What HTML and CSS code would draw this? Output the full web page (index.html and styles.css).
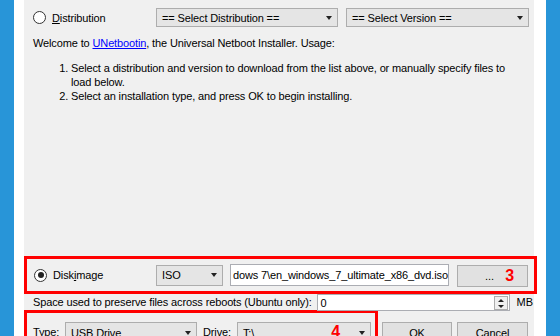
FILE: index.html
```html
<!DOCTYPE html>
<html>
<head>
<meta charset="utf-8">
<link rel="stylesheet" href="styles.css">
</head>
<body>
<div class="edge edge-left"></div>
<div class="gutter gutter-left"></div>
<main class="panel">
  <div class="row row-dist">
    <span class="radio"></span>
    <span class="label label-dist"><u>D</u>istribution</span>
    <div class="combo combo-dist"><span>== Select Distribution ==</span><i class="arrow"></i></div>
    <div class="combo combo-ver"><span>== Select Version ==</span><i class="arrow"></i></div>
  </div>
  <p class="welcome">Welcome to <a href="#">UNetbootin</a>, the Universal Netboot Installer. Usage:</p>
  <ol class="steps">
    <li>Select a distribution and version to download from the list above, or manually specify files to load below.</li>
    <li>Select an installation type, and press OK to begin installing.</li>
  </ol>
  <div class="spacer"></div>
  <div class="mark mark-disk">
    <span class="radio radio-on"></span>
    <span class="label label-disk">Disk<u>i</u>mage</span>
    <div class="combo combo-iso"><span>ISO</span><i class="arrow"></i></div>
    <div class="field field-path"><span>dows 7\en_windows_7_ultimate_x86_dvd.iso</span></div>
    <button class="btn btn-browse">...<b class="num">3</b></button>
  </div>
  <div class="row row-space">
    <span class="label label-space">Space used to preserve files across reboots (Ubuntu only):</span>
    <div class="field field-spin"><span>0</span>
      <div class="spin"><i class="up"></i><i class="down"></i></div>
    </div>
    <span class="label label-mb">MB</span>
  </div>
  <div class="row row-bottom">
    <div class="mark mark-target">
      <span class="label label-type">Type:</span>
      <div class="combo combo-type"><span>USB Drive</span><i class="arrow"></i></div>
      <span class="label label-drive">Drive:</span>
      <div class="combo combo-drive"><span>T:\</span><b class="num num-drive">4</b><i class="arrow"></i></div>
    </div>
    <button class="btn btn-ok">OK</button>
    <button class="btn btn-cancel">Cancel</button>
  </div>
</main>
<div class="gutter gutter-right"></div>
<div class="edge edge-right"></div>
</body>
</html>
```

FILE: styles.css
```css
* { box-sizing: border-box; }
html, body { margin: 0; padding: 0; }
body {
  width: 560px;
  height: 336px;
  overflow: hidden;
  display: flex;
  font-family: "Liberation Sans", Arial, sans-serif;
  font-size: 11px;
  letter-spacing: -0.13px;
  color: #000;
}
.edge { background: #2895d8; flex: none; }
.edge-left { width: 14px; }
.edge-right { width: 14px; }
.gutter { background: #fff; flex: none; }
.gutter-left { width: 10px; }
.gutter-right { width: 12px; }
.panel {
  width: 510px;
  height: 336px;
  flex: none;
  background: #f0f0f0;
  display: flex;
  flex-direction: column;
  padding: 8px 5px 0 9px;
  position: relative;
  z-index: 1;
}
.row { display: flex; align-items: center; flex: none; }
.row-dist { height: 19px; }
.radio {
  width: 13px; height: 13px;
  border: 1px solid #333;
  border-radius: 50%;
  background: #fff;
  flex: none;
  position: relative;
}
.radio-on::after {
  content: "";
  position: absolute;
  left: 2.5px; top: 2.5px;
  width: 6px; height: 6px;
  border-radius: 50%;
  background: #222;
}
.label { white-space: nowrap; }
.label-dist { margin-left: 6px; width: 105px; }
.combo {
  height: 19px;
  border: 1px solid #adadad;
  background: #e5e5e5;
  display: flex;
  align-items: center;
  padding-left: 5px;
  position: relative;
  flex: none;
}
.combo span { white-space: nowrap; }
.arrow {
  position: absolute;
  right: 5px; top: 50%;
  margin-top: -2px;
  width: 0; height: 0;
  border-left: 3.5px solid transparent;
  border-right: 3.5px solid transparent;
  border-top: 4px solid #222;
}
.combo-dist { width: 182px; }
.combo-ver { width: 183px; margin-left: 8px; }
.welcome { margin: 9px 0 0; line-height: 14px; }
.welcome a { color: #0000ff; text-decoration: underline; }
.steps {
  margin: 11px 0 0;
  padding: 0 14px 0 38px;
  line-height: 14px;
}
.spacer { flex: 1; }
.mark {
  border: 3px solid #ff0000;
  flex: none;
}
.mark-disk {
  margin: 0 -8px 0 -9px;
  height: 38px;
  display: flex;
  align-items: center;
  padding-left: 7px;
}
.label-disk { margin-left: 6px; width: 103px; }
.combo-iso { width: 67px; height: 21px; }
.field {
  background: #fff;
  border: 1px solid #abadb3;
  display: flex;
  align-items: center;
  padding-left: 3px;
  flex: none;
  overflow: hidden;
}
.field span { white-space: nowrap; }
.field-path { width: 219px; height: 22px; margin-left: 7px; padding-left: 2px; }
.btn {
  font: inherit;
  letter-spacing: inherit;
  color: #000;
  background: #e1e1e1;
  border: 1px solid #adadad;
  height: 22px;
  padding: 0;
  flex: none;
}
.btn-browse {
  width: 71px;
  margin-left: 8px;
  position: relative;
  text-align: center;
  padding-right: 6px;
  margin-top: 2px;
}
.num {
  color: #ff0000;
  font-weight: bold;
  font-size: 16px;
  font-family: "Liberation Sans", Arial, sans-serif;
}
.btn-browse .num { position: absolute; right: 13px; top: 1px; }
.row-space { height: 16px; }
.label-space { width: 279px; }
.field-spin {
  width: 193px; height: 17px;
  margin-left: 5px;
  margin-top: 1px;
  position: relative;
}
.spin {
  position: absolute;
  right: 1px; top: 1px; bottom: 0;
  width: 14px;
  border: 1px solid #adadad;
  background: #f0f0f0;
  display: flex;
  flex-direction: column;
  align-items: center;
  justify-content: space-around;
}
.spin i { width: 0; height: 0; border-left: 3px solid transparent; border-right: 3px solid transparent; }
.spin .up { border-bottom: 3px solid #222; }
.spin .down { border-top: 3px solid #222; }
.label-mb { margin-left: 7px; }
.row-bottom { align-items: flex-start; height: 26px; }
.mark-target {
  margin-left: -9px;
  width: 354px;
  height: 40px;
  border-bottom: 0;
  display: flex;
  align-items: flex-start;
  padding: 9px 0 0 6px;
}
.mark-target .label { line-height: 21px; }
.combo-type { width: 132px; height: 21px; margin-left: 6px; }
.label-type { width: 26px; }
.label-drive { margin-left: 6px; width: 34px; }
.combo-drive { width: 134px; height: 21px; }
.num-drive { position: absolute; right: 30px; top: 0; }
.btn-ok { width: 70px; margin-left: 4px; margin-top: 12px; }
.btn-cancel { width: 71px; margin-left: 5px; margin-top: 12px; }
```
